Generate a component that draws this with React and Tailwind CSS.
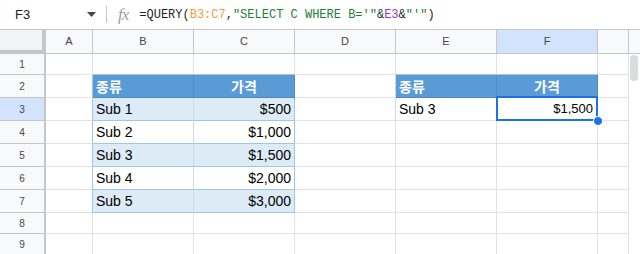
import React from 'react';

const cols = [
  { key: 'A', w: 'w-[47px]' },
  { key: 'B', w: 'w-[101px]' },
  { key: 'C', w: 'w-[101px]' },
  { key: 'D', w: 'w-[101px]' },
  { key: 'E', w: 'w-[101px]' },
  { key: 'F', w: 'w-[101px]' },
  { key: 'G', w: 'w-[31px]' },
];

const rows = [
  { n: 1, h: 'h-[21px]' },
  { n: 2, h: 'h-[23px]' },
  { n: 3, h: 'h-[23px]' },
  { n: 4, h: 'h-[23px]' },
  { n: 5, h: 'h-[23px]' },
  { n: 6, h: 'h-[23px]' },
  { n: 7, h: 'h-[23px]' },
  { n: 8, h: 'h-[21px]' },
  { n: 9, h: 'h-[21px]' },
];

const data = {
  3: ['Sub 1', '$500'],
  4: ['Sub 2', '$1,000'],
  5: ['Sub 3', '$1,500'],
  6: ['Sub 4', '$2,000'],
  7: ['Sub 5', '$3,000'],
};

const Cell = ({ w, className = '', children }) => (
  <div className={`${w} h-full shrink-0 box-border border-r border-b flex items-center px-[3px] overflow-hidden whitespace-nowrap ${className}`}>
    {children}
  </div>
);

const Header = ({ children }) => (
  <span className="text-white font-bold text-[14px] font-['Noto_Sans_CJK_KR',sans-serif] leading-none">{children}</span>
);

function renderCell(col, row) {
  const base = 'border-[#e1e1e1]';
  const inTable = ['B', 'C'].includes(col.key) && row.n >= 2 && row.n <= 7;
  const inResult = ['E', 'F'].includes(col.key) && (row.n === 2 || row.n === 3);

  if (row.n === 2 && (inTable || inResult)) {
    return (
      <Cell key={col.key} w={col.w} className={`bg-[#5b9bd5] border-[#4f8ac4] ${col.key === 'C' || col.key === 'F' ? 'justify-center' : ''}`}>
        <Header>{col.key === 'C' || col.key === 'F' ? '가격' : '종류'}</Header>
      </Cell>
    );
  }
  if (inTable) {
    const [name, price] = data[row.n];
    const striped = row.n % 2 === 1;
    return (
      <Cell key={col.key} w={col.w} className={`${striped ? 'bg-[#ddebf7]' : 'bg-white'} border-r-[#9fc5e8] border-b-[#9fc5e8] ${col.key === 'B' ? 'border-r-[#c9daf0]' : ''} ${col.key === 'C' ? 'justify-end' : ''}`}>
        <span className="text-[14px] text-black">{col.key === 'B' ? name : price}</span>
      </Cell>
    );
  }
  if (inResult) {
    return (
      <Cell key={col.key} w={col.w} className={`${base} ${col.key === 'F' ? 'justify-end' : ''}`}>
        <span className={col.key === 'F' ? 'text-[13px] text-black pr-[1px]' : 'text-[14px] text-black'}>
          {col.key === 'E' ? 'Sub 3' : '$1,500'}
        </span>
      </Cell>
    );
  }
  let extra = base;
  if (col.key === 'A' && row.n >= 2 && row.n <= 7) extra = 'border-b-[#e1e1e1] border-r-[#9fc5e8]';
  if (col.key === 'D' && (row.n === 2 || row.n === 3)) extra = 'border-b-[#e1e1e1] border-r-[#c9daf0]';
  if (row.n === 1 && ['B', 'C'].includes(col.key)) extra = 'border-r-[#e1e1e1] border-b-[#9fc5e8]';
  if (row.n === 1 && ['E', 'F'].includes(col.key)) extra = 'border-r-[#e1e1e1] border-b-[#9fc5e8]';
  return <Cell key={col.key} w={col.w} className={extra} />;
}

export default function App() {
  return (
    <div className="w-[640px] h-[254px] overflow-hidden bg-white font-['Liberation_Sans',Arial,sans-serif] text-[#1f1f1f] relative">
      {/* formula bar */}
      <div className="h-[30px] box-border border-b border-[#c7c7c7] flex items-center">
        <div className="w-[106px] flex items-center justify-between pl-[15px] pr-[10px]">
          <span className="text-[13px] text-[#1f1f1f]">F3</span>
          <svg width="9" height="5" viewBox="0 0 9 5"><path d="M0 0h9L4.5 5z" fill="#444746" /></svg>
        </div>
        <div className="w-px h-[17px] bg-[#c7c7c7]" />
        <span className="ml-[11px] text-[17px] italic text-[#a0a0a0] font-['Liberation_Serif',serif] tracking-[-1px] leading-none">fx</span>
        <span className="ml-[11px] text-[12px] font-['Liberation_Mono',monospace] text-[#1f1f1f] whitespace-pre">
          =QUERY(<span className="text-[#f29d38]">B3:C7</span>,<span className="text-[#188038]">"SELECT C WHERE B='"</span>&amp;<span className="text-[#9334e6]">E3</span>&amp;<span className="text-[#188038]">"'"</span>)
        </span>
      </div>

      {/* column headers */}
      <div className="h-[24px] flex bg-[#f8f9fa]">
        <div className="w-[46px] h-full shrink-0 box-border bg-[#f1f3f4] border-r-[4px] border-b-[4px] border-[#c4c7c5]" />
        {cols.map((c) => (
          <div
            key={c.key}
            className={`${c.w} h-full shrink-0 box-border border-r border-b border-[#c4c7c5] flex items-center justify-center text-[11px] text-[#444746] ${c.key === 'F' ? 'bg-[#d3e3fd] text-[#0b57d0]' : ''}`}
          >
            {c.key === 'G' ? '' : c.key}
          </div>
        ))}
        <div className="flex-1 h-full bg-[#f8f9fa] border-b border-[#c4c7c5]" />
      </div>

      {/* rows */}
      {rows.map((r) => (
        <div key={r.n} className={`${r.h} flex`}>
          <div
            className={`w-[46px] h-full shrink-0 box-border border-r-2 border-b border-r-[#c4c7c5] border-b-[#c4c7c5] flex items-center justify-center text-[10px] text-[#444746] ${r.n === 3 ? 'bg-[#d3e3fd]' : 'bg-[#f8f9fa]'}`}
          >
            {r.n}
          </div>
          {cols.map((c) => renderCell(c, r))}
          <div className="flex-1 h-full" />
        </div>
      ))}

      {/* selection on F3 */}
      <div className="absolute left-[496px] top-[96px] w-[102px] h-[25px] border-2 border-[#1a73e8] pointer-events-none" />
      <div className="absolute left-[593px] top-[116px] w-[10px] h-[10px] rounded-full bg-[#1a73e8] border border-white" />

      {/* scrollbar */}
      <div className="absolute left-[629px] top-[54px] w-[11px] h-[200px] bg-white" />
      <div className="absolute left-[630px] top-[55px] w-[8px] h-[26px] rounded-full bg-[#dadce0]" />
    </div>
  );
}
